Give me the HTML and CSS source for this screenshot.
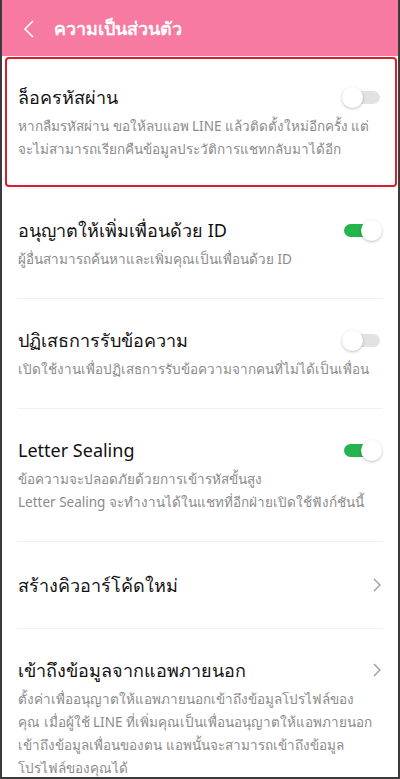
FILE: index.html
```html
<!DOCTYPE html>
<html lang="th">
  <head>
    <meta charset="utf-8">
    <title>ความเป็นส่วนตัว</title>
    <link rel="stylesheet" href="styles.css">
  </head>
  <body>
  <div id="screen">

    <div id="header">
      <svg class="back" width="14" height="20" viewBox="0 0 14 20"><path d="M11 2 L3 10 L11 18" fill="none" stroke="#fff" stroke-width="1.6"/></svg>
      <span class="head-title">ความเป็นส่วนตัว</span>
    </div>

    <div class="row highlight">
      <div class="text">
        <div class="title">ล็อครหัสผ่าน</div>
        <div class="desc">หากลืมรหัสผ่าน ขอให้ลบแอพ LINE แล้วติดตั้งใหม่อีกครั้ง แต่<br>จะไม่สามารถเรียกคืนข้อมูลประวัติการแชทกลับมาได้อีก</div>
      </div>
      <span class="toggle"></span>
    </div>

    <div class="row">
      <div class="text">
        <div class="title">อนุญาตให้เพิ่มเพื่อนด้วย ID</div>
        <div class="desc">ผู้อื่นสามารถค้นหาและเพิ่มคุณเป็นเพื่อนด้วย ID</div>
      </div>
      <span class="toggle on"></span>
    </div>

    <div class="row">
      <div class="text">
        <div class="title">ปฏิเสธการรับข้อความ</div>
        <div class="desc">เปิดใช้งานเพื่อปฏิเสธการรับข้อความจากคนที่ไม่ได้เป็นเพื่อน</div>
      </div>
      <span class="toggle"></span>
    </div>

    <div class="row">
      <div class="text">
        <div class="title">Letter Sealing</div>
        <div class="desc">ข้อความจะปลอดภัยด้วยการเข้ารหัสขั้นสูง<br>Letter Sealing จะทำงานได้ในแชทที่อีกฝ่ายเปิดใช้ฟังก์ชันนี้</div>
      </div>
      <span class="toggle on"></span>
    </div>

    <div class="row simple">
      <div class="text">
        <div class="title">สร้างคิวอาร์โค้ดใหม่</div>
      </div>
      <svg class="arrow" width="8" height="14" viewBox="0 0 8 14"><path d="M1 1 L7 7 L1 13" fill="none" stroke="#999" stroke-width="1.3"/></svg>
    </div>

    <div class="row last">
      <div class="text">
        <div class="title">เข้าถึงข้อมูลจากแอพภายนอก</div>
        <div class="desc">ตั้งค่าเพื่ออนุญาตให้แอพภายนอกเข้าถึงข้อมูลโปรไฟล์ของ<br>คุณ เมื่อผู้ใช้ LINE ที่เพิ่มคุณเป็นเพื่อนอนุญาตให้แอพภายนอก<br>เข้าถึงข้อมูลเพื่อนของตน แอพนั้นจะสามารถเข้าถึงข้อมูล<br>โปรไฟล์ของคุณได้</div>
      </div>
      <svg class="arrow" width="8" height="14" viewBox="0 0 8 14"><path d="M1 1 L7 7 L1 13" fill="none" stroke="#999" stroke-width="1.3"/></svg>
    </div>

  </div>
  </body>
</html>
```

FILE: styles.css
```css
html {
  height: 100%;
}
body {
  margin: 0;
  padding: 0;
  background: #ffffff;
  font-family: "Noto Sans", "DejaVu Sans", sans-serif;
  color: #111;
}

#screen {
  width: 400px;
  height: 779px;
  box-sizing: border-box;
  border: 2px solid #3b3b3b;
  border-top: none;
  overflow: hidden;
}

#header {
  height: 56px;
  background: #f77ba1;
  display: flex;
  align-items: center;
  padding-left: 20px;
}
.back {
  margin-right: 18px;
  margin-top: 2px;
}
.head-title {
  color: #fff;
  font-size: 18px;
  font-weight: bold;
}

.row {
  display: flex;
  align-items: flex-start;
  margin: 0 15px;
  padding: 28px 0 27px;
  border-bottom: 1px solid #f1f1f1;
  position: relative;
}
.row.simple {
  padding: 30px 0 30px;
  align-items: center;
}
.row.last {
  border-bottom: none;
  padding-bottom: 0;
}
.text {
  flex: 1;
  min-width: 0;
  padding-left: 1px;
}
.title {
  font-size: 18px;
  line-height: 26px;
}
.desc {
  font-size: 13.5px;
  line-height: 23px;
  color: #8b8b8b;
  margin-top: 5px;
  white-space: nowrap;
}

/* red frame around the first row */
.highlight::after {
  content: "";
  position: absolute;
  left: -12px;
  right: -14px;
  top: 1px;
  bottom: 1px;
  border: 2px solid #d7202c;
  border-radius: 4px;
}

.toggle {
  flex: none;
  position: relative;
  width: 36px;
  height: 13px;
  margin-top: 7px;
  margin-right: 3px;
  border-radius: 7px;
  background: #e2e2e2;
}
.toggle::after {
  content: "";
  position: absolute;
  left: -2px;
  top: -4px;
  width: 21px;
  height: 21px;
  border-radius: 50%;
  background: #fff;
  box-shadow: 0 1px 3px rgba(0,0,0,0.25);
}
.toggle.on {
  background: #25b44e;
}
.toggle.on::after {
  left: auto;
  right: -2px;
}

.arrow {
  flex: none;
  margin-right: 2px;
}
.row.last .arrow {
  margin-top: 6px;
}
```
